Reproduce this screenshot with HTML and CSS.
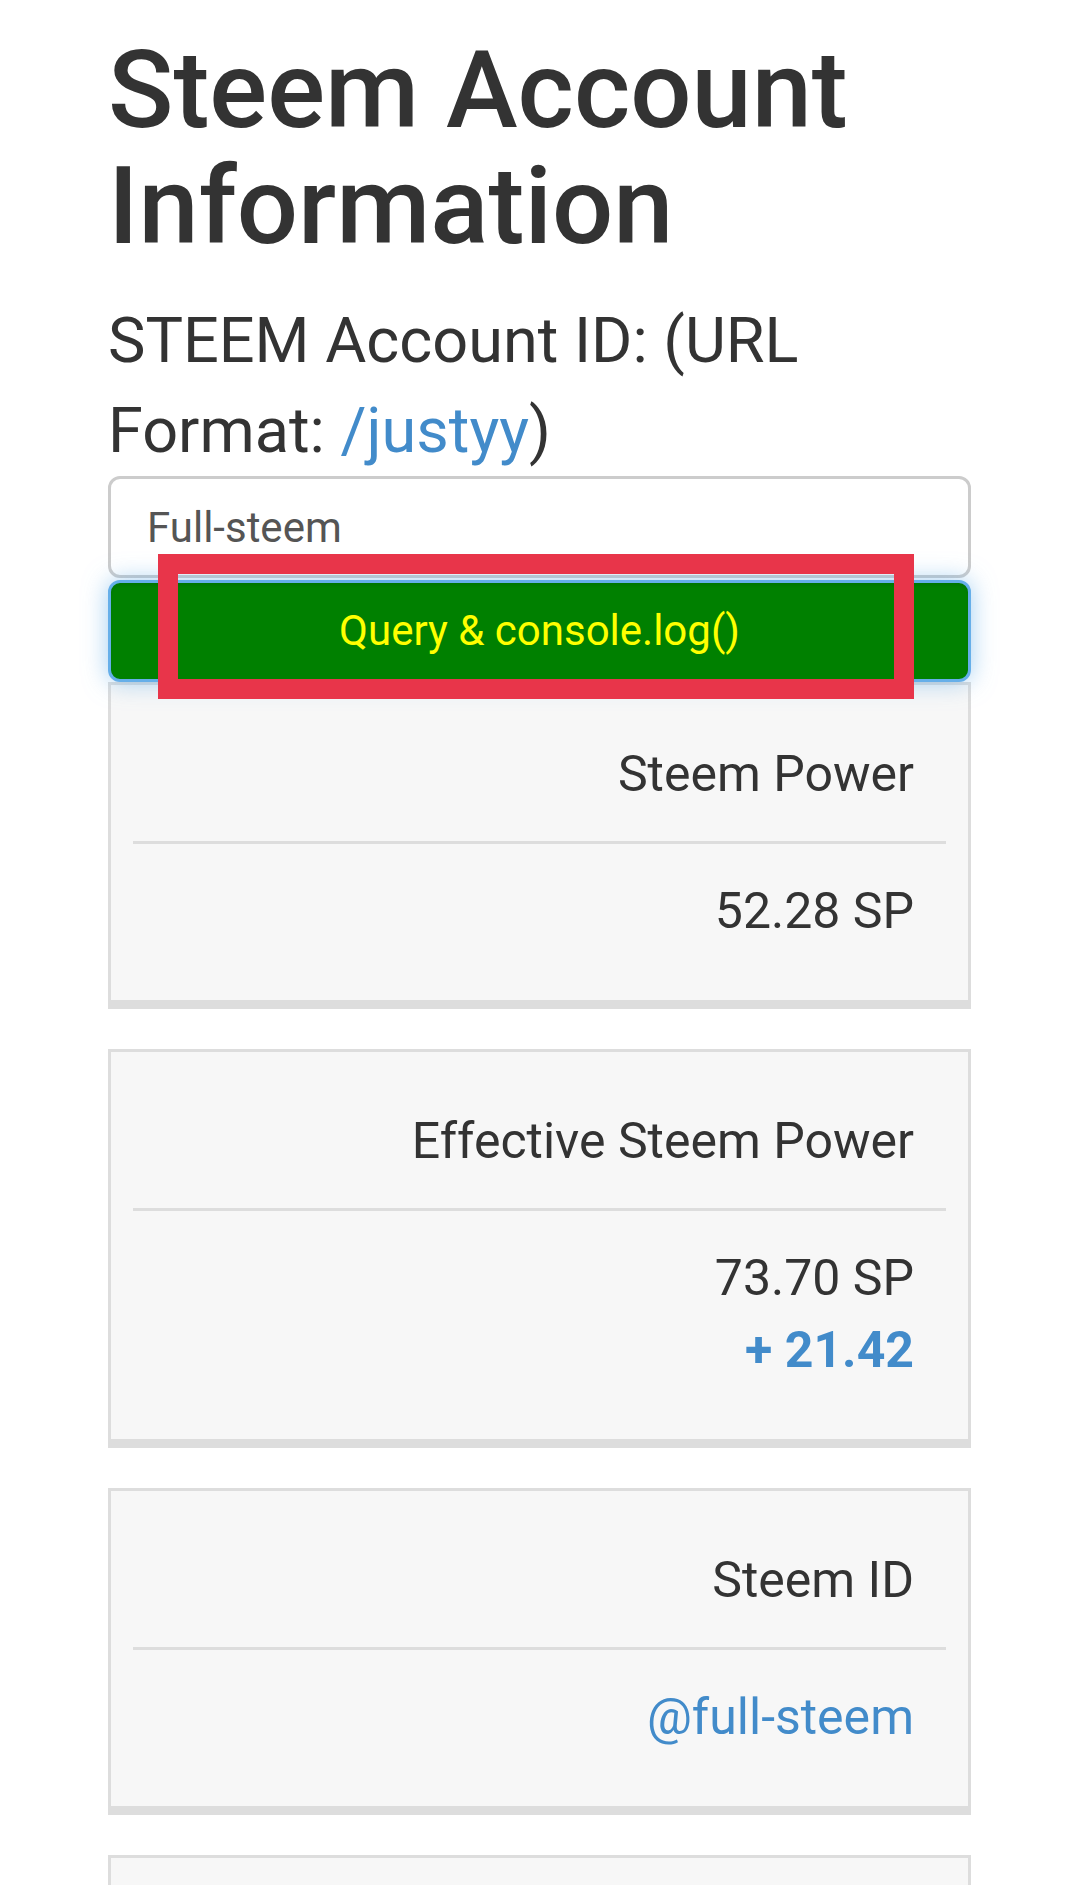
FILE: index.html
```html
<!DOCTYPE html>
<html lang="en">
<head>
<meta charset="utf-8">
<title>Steem Account Information</title>
<link rel="stylesheet" href="styles.css">
</head>
<body>
<main class="page">
  <h1 class="title">Steem Account Information</h1>
  <p class="label">STEEM Account ID: (URL Format: <a class="link" href="#">/justyy</a>)</p>
  <div class="form">
    <input class="field" type="text" value="Full-steem">
    <button class="query" type="button">Query &amp; console.log()</button>
    <div class="highlight"></div>
  </div>
  <section class="card">
    <div class="cell">Steem Power</div>
    <div class="cell cell-value">52.28 SP</div>
  </section>
  <section class="card">
    <div class="cell">Effective Steem Power</div>
    <div class="cell cell-value">73.70 SP<br><span class="delta">+ 21.42</span></div>
  </section>
  <section class="card">
    <div class="cell">Steem ID</div>
    <div class="cell cell-value"><a class="link" href="#">@full-steem</a></div>
  </section>
  <section class="card">
    <div class="cell">Voting Power</div>
    <div class="cell cell-value">100.00%</div>
  </section>
</main>
</body>
</html>
```

FILE: styles.css
```css
html, body {
  margin: 0;
  padding: 0;
  background: #ffffff;
}

body {
  font-family: Roboto, "Noto Sans", "Liberation Sans", sans-serif;
  color: #333333;
}

.page {
  padding: 32px 108px 60px;
}

.title {
  margin: 0;
  font-size: 108px;
  line-height: 116px;
  font-weight: 500;
  color: #333333;
  letter-spacing: 0;
}

.label {
  margin: 32px 0 0;
  font-size: 63px;
  line-height: 90px;
  font-weight: 400;
  color: #333333;
}

.link {
  color: #428bca;
  text-decoration: none;
}

.form {
  position: relative;
  display: flex;
  flex-direction: column;
  gap: 2px;
}

.field {
  box-sizing: border-box;
  display: block;
  width: 100%;
  height: 102px;
  margin: 0;
  padding: 0 36px;
  border: 3px solid #cccccc;
  border-radius: 12px;
  background: #ffffff;
  font-family: Roboto, "Noto Sans", sans-serif;
  font-size: 42px;
  color: #555555;
  outline: none;
}

.query {
  box-sizing: border-box;
  display: block;
  width: 100%;
  height: 102px;
  margin: 0;
  padding: 0 36px;
  border: 3px solid #66afe9;
  border-radius: 12px;
  background: #008000;
  color: #ffff00;
  font-family: Roboto, "Noto Sans", sans-serif;
  font-size: 42px;
  line-height: 90px;
  box-shadow: inset 0 3px 3px rgba(0, 0, 0, 0.075), 0 0 24px rgba(102, 175, 233, 0.6);
  outline: none;
}

.highlight {
  position: absolute;
  left: 50px;
  top: 78px;
  width: 756px;
  height: 145px;
  box-sizing: border-box;
  border: 20px solid #e8354a;
  pointer-events: none;
}

.card {
  box-sizing: border-box;
  margin: 0 0 40px;
  padding: 22px;
  background: #f7f7f7;
  border: 3px solid #dddddd;
  border-bottom-width: 9px;
}

.cell {
  padding: 31px 32px;
  font-size: 50px;
  line-height: 72px;
  text-align: right;
  color: #333333;
}

.cell-value {
  border-top: 3px solid #dddddd;
}

.delta {
  font-weight: 700;
  color: #428bca;
}
```
